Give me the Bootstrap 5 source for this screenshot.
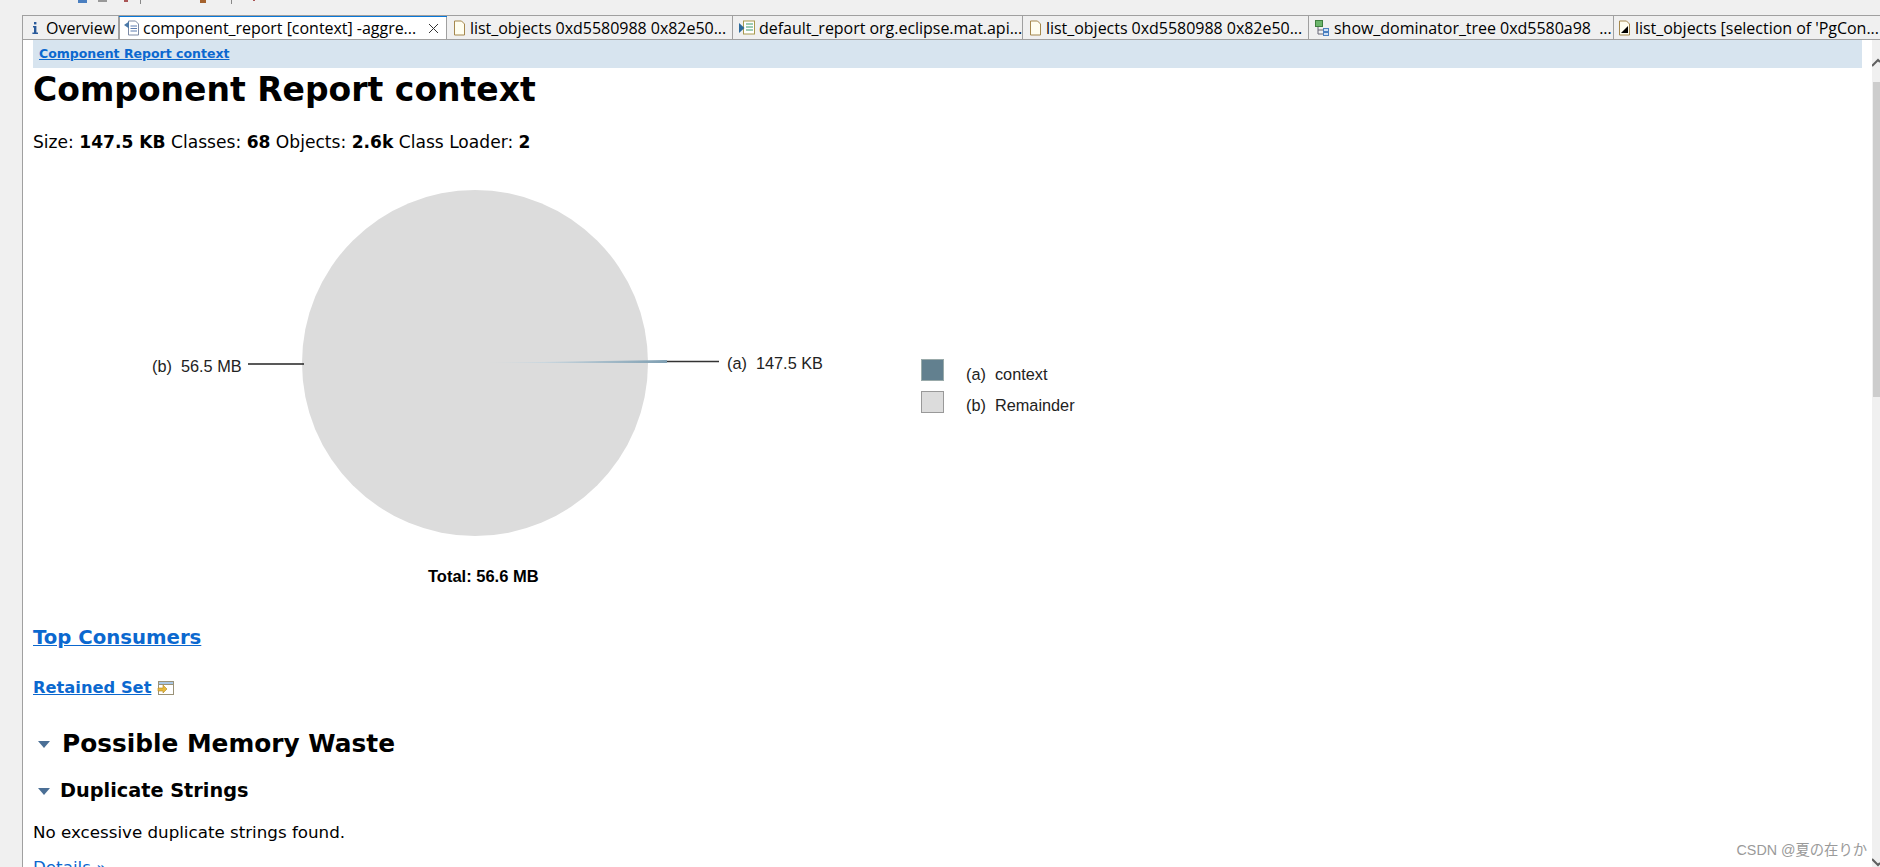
<!DOCTYPE html>
<html lang="en"><head><meta charset="utf-8"><title>Component Report context</title>
<link href="https://cdn.jsdelivr.net/npm/bootstrap@5.3.0/dist/css/bootstrap.min.css" rel="stylesheet">
<style>
html,body{height:867px;overflow:hidden;background:#f0f0f0}
body{font-family:"DejaVu Sans",sans-serif;color:#000}
.topstrip{height:15px;background:#f0f0f0}
.topstrip svg{display:block}
.tabrow{height:25px;margin-left:22px;border-top:1px solid #a0a0a0;border-bottom:1px solid #a0a0a0;border-left:1px solid #a0a0a0;background:#f0f0f0;font-family:"Open Sans","Noto Sans",sans-serif;font-size:16px;letter-spacing:-.03px;white-space:nowrap;overflow:hidden}
.tabx{height:23px;border-right:1px solid #a0a0a0;padding-left:6px;gap:4px;flex:none;line-height:22px}
.tabx svg{flex:none}
.t1{width:96px;padding-left:9px;gap:8px}
.t2{width:328px;background:#fff;position:relative;padding-left:4px;height:24px;border-left:1px solid #a0a0a0;gap:3px}
.t2::before{content:"";position:absolute;left:-1px;right:-1px;top:-1px;height:2px;background:#0a78d7}
.t3{width:286px}.t4{width:290px}.t5{width:286px}.t6{width:305px}.t7{flex:1;border-right:0;padding-left:4px}
.closex{margin-left:auto;margin-right:7px}
.shell{height:827px;margin-left:22px;border-left:1px solid #a0a0a0;background:#fff}
.pagearea{flex:1;min-width:0;padding:0 10px 0 10px;overflow:hidden}
.crumb{height:28px;background:#d7e4ef;padding-left:6px;font-size:12.500px;font-weight:700;line-height:28px}
.crumb a,.bluelink{color:#0b68cf;text-decoration:underline}
.maintitle{font-size:33px;font-weight:700;line-height:40px;margin:2px 0 0}
.statline{font-size:17.100px;line-height:20px;margin:22px 0 0}
.chartbox{display:block;width:1100px;height:435px;margin-top:25px}
.chartbox text{font-family:"Liberation Sans",sans-serif;font-size:16.300px;fill:#222}
.chartbox .totaltext{font-weight:700;fill:#000;font-size:16.500px}
.topcons{font-size:19.700px;font-weight:700;line-height:26px;margin:13px 0 0}
.retset{font-size:16.300px;font-weight:700;line-height:24px;margin:25px 0 0;gap:6px}
.sect1{font-size:24.800px;font-weight:700;line-height:32px;margin:28px 0 0;gap:12px}
.sect2{font-size:19.300px;font-weight:700;line-height:26px;margin:18px 0 0;gap:10px}
.plainline{font-size:16.700px;line-height:20px;margin:18px 0 0}
.detlink{font-size:16.700px;line-height:20px;margin:15px 0 0;color:#0b68cf}
.scrolltrack{width:8px;flex:none;background:#f0f0f0;position:relative}
.thumbbar{position:absolute;left:1px;right:0;top:42px;height:315px;background:#cdcdcd}
.arrowup{position:absolute;left:0;top:18px}
.arrowdown{position:absolute;left:0;bottom:0}
.watermark{position:absolute;right:13px;bottom:6px;font-family:"Liberation Sans","Noto Sans CJK JP",sans-serif;font-size:14.300px;color:#9a9a9a}
.triicon{margin-left:5px}
</style></head>
<body class="position-relative">
<div class="topstrip d-flex align-items-start">
<svg width="260" height="5" viewBox="0 0 260 5"><rect x="78" y="0" width="9" height="3" fill="#4a7fc0"/><rect x="98" y="0" width="9" height="2" fill="#999"/><rect x="124" y="0" width="4" height="2" fill="#a55"/><rect x="140" y="0" width="1" height="4" fill="#888"/><rect x="200" y="0" width="6" height="3" fill="#a5622d"/><rect x="231" y="0" width="1" height="4" fill="#888"/><rect x="253" y="0" width="2" height="1" fill="#a55"/></svg>
</div>
<div class="tabrow d-flex">
<div class="tabx t1 d-flex align-items-center"><svg width="6" height="12" viewBox="0 0 6 12"><rect x="2" y="0" width="2.400" height="2.400" fill="#2a5a9a"/><path d="M1 4h3.400v6.600H6V12H.4v-1.400H2V5.400H1z" fill="#2a5a9a"/></svg><span>Overview</span></div>
<div class="tabx t2 d-flex align-items-center"><svg width="16" height="16" viewBox="0 0 16 16"><path d="M4.500 1h7l3 3v11h-10z" fill="#fff" stroke="#7c8aa5"/><path d="M6.500 6h6.500M6.500 8.500h6.500M6.500 11h6.500" stroke="#5c7cb0"/><path d="M0 5l5-3.500v7z" fill="#4b79a8"/></svg><span>component_report [context] -aggre...</span><svg class="closex" width="11" height="11" viewBox="0 0 11 11"><path d="M1 1l9 9M10 1l-9 9" stroke="#333"/></svg></div>
<div class="tabx t3 d-flex align-items-center"><svg width="13" height="16" viewBox="0 0 13 16"><path d="M1.500 1h7l3 3v11h-10z" fill="#fffef0" stroke="#a5884d"/></svg><span>list_objects 0xd5580988 0x82e50...</span></div>
<div class="tabx t4 d-flex align-items-center"><svg width="16" height="16" viewBox="0 0 16 16"><rect x="4.500" y="1" width="11" height="13" fill="#fff" stroke="#a89a4d"/><path d="M7 4h7M7 7h7M7 10h7" stroke="#3c9a6a"/><path d="M0 3l5.500 5-5.500 5z" fill="#2c6a9c"/></svg><span>default_report org.eclipse.mat.api...</span></div>
<div class="tabx t5 d-flex align-items-center"><svg width="13" height="16" viewBox="0 0 13 16"><path d="M1.500 1h7l3 3v11h-10z" fill="#fffef0" stroke="#a5884d"/></svg><span>list_objects 0xd5580988 0x82e50...</span></div>
<div class="tabx t6 d-flex align-items-center"><svg width="15" height="16" viewBox="0 0 15 16"><rect x="0.500" y="0.500" width="7" height="6" fill="#6cb66c" stroke="#3f7f3f"/><path d="M3 7v7h5M3 10h5" stroke="#667" fill="none"/><rect x="8.500" y="8.500" width="5" height="3" fill="#cfe0f5" stroke="#4a7fc0"/><rect x="8.500" y="12.500" width="5" height="3" fill="#cfe0f5" stroke="#4a7fc0"/></svg><span>show_dominator_tree 0xd5580a98 &nbsp;...</span></div>
<div class="tabx t7 d-flex align-items-center"><svg width="13" height="16" viewBox="0 0 13 16"><path d="M1.500 1h7l3 3v11h-10z" fill="#fffef0" stroke="#a5884d"/><path d="M3 13l7-7v7z" fill="#000"/></svg><span>list_objects [selection of 'PgCon...</span></div>
</div>
<div class="shell d-flex">
<div class="pagearea">
<div class="crumb"><a href="#">Component Report context</a></div>
<h1 class="maintitle">Component Report context</h1>
<p class="statline">Size: <b>147.5 KB</b> Classes: <b>68</b> Objects: <b>2.6k</b> Class Loader: <b>2</b></p>
<svg class="chartbox" viewBox="0 0 1100 435">
<defs><linearGradient id="wedgefade" x1="0" x2="1" y1="0" y2="0"><stop offset="0" stop-color="#dcdcdc"/><stop offset=".35" stop-color="#c9d6de"/><stop offset="1" stop-color="#7f9fb2"/></linearGradient></defs>
<circle cx="442" cy="186" r="173" fill="#dcdcdc"/>
<path d="M446 186L634 183V186z" fill="url(#wedgefade)"/>
<path d="M634 184.500H686" stroke="#333" stroke-width="1.300"/>
<path d="M215 187H271" stroke="#222" stroke-width="1.300"/>
<text x="119" y="195" xml:space="preserve">(b)  56.5 MB</text>
<text x="694" y="192" xml:space="preserve">(a)  147.5 KB</text>
<rect x="888.500" y="182.500" width="22" height="21" fill="#62808f" stroke="#9aa"/>
<rect x="888.500" y="214.500" width="22" height="21" fill="#dcdcdc" stroke="#999"/>
<text x="933" y="203" xml:space="preserve">(a)  context</text>
<text x="933" y="234" xml:space="preserve">(b)  Remainder</text>
<text class="totaltext" x="395" y="405">Total: 56.6 MB</text>
</svg>
<div class="topcons"><a class="bluelink" href="#">Top Consumers</a></div>
<div class="retset d-flex align-items-center"><a class="bluelink" href="#">Retained Set</a><svg width="18" height="16" viewBox="0 0 18 16"><rect x="1.500" y="1.500" width="15" height="13" fill="#fff" stroke="#9a9278"/><rect x="1.500" y="1.500" width="15" height="3" fill="#a9c7e6" stroke="#9a9278"/><path d="M1 8h5V5l4 4-4 4v-2H1z" fill="#e6b93d" stroke="#b5881f" stroke-width=".6"/></svg></div>
<div class="sect1 d-flex align-items-center"><svg class="triicon" width="12" height="7" viewBox="0 0 12 7"><path d="M0 0h12L6 7z" fill="#4b6f96"/></svg><span>Possible Memory Waste</span></div>
<div class="sect2 d-flex align-items-center"><svg class="triicon" width="12" height="7" viewBox="0 0 12 7"><path d="M0 0h12L6 7z" fill="#4b6f96"/></svg><span>Duplicate Strings</span></div>
<p class="plainline">No excessive duplicate strings found.</p>
<div class="detlink">Details »</div>
</div>
<div class="scrolltrack">
<svg class="arrowup" width="8" height="10" viewBox="0 0 8 10"><path d="M0 8L6 2l2 2" stroke="#606060" stroke-width="2" fill="none"/></svg>
<div class="thumbbar"></div>
<svg class="arrowdown" width="8" height="10" viewBox="0 0 8 10"><path d="M0 2l6 6 2-2" stroke="#606060" stroke-width="2" fill="none"/></svg>
</div>
</div>
<div class="watermark">CSDN @夏の在りか</div>
</body></html>
